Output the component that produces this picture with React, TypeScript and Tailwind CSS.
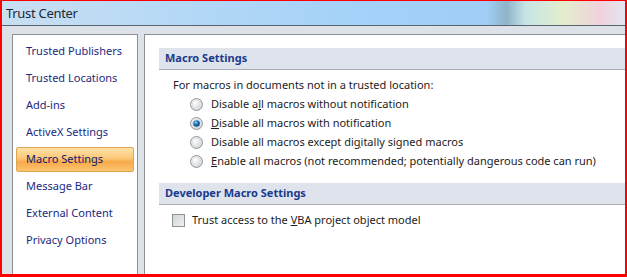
import React from 'react';

const font = { fontFamily: '"Noto Sans", "Open Sans", sans-serif' };

const navItems = [
  'Trusted Publishers',
  'Trusted Locations',
  'Add-ins',
  'ActiveX Settings',
  'Macro Settings',
  'Message Bar',
  'External Content',
  'Privacy Options',
];

const Radio: React.FC<{ checked?: boolean }> = ({ checked }) => (
  <svg width="13" height="13" viewBox="0 0 13 13" className="shrink-0">
    <defs>
      <radialGradient id="rf" cx="0.35" cy="0.35" r="0.7">
        <stop offset="0" stopColor="#ffffff" />
        <stop offset="1" stopColor="#cfd3d6" />
      </radialGradient>
      <radialGradient id="rd" cx="0.4" cy="0.35" r="0.7">
        <stop offset="0" stopColor="#8fd0f5" />
        <stop offset="0.5" stopColor="#1c6fb5" />
        <stop offset="1" stopColor="#0a3f78" />
      </radialGradient>
    </defs>
    <circle cx="6.5" cy="6.5" r="6" fill="url(#rf)" stroke="#939899" />
    <circle cx="6.5" cy="6.5" r="4.3" fill="none" stroke="#dfe2e4" />
    {checked && <circle cx="6.5" cy="6.5" r="3.3" fill="url(#rd)" />}
  </svg>
);

const RadioRow: React.FC<{ checked?: boolean; children: React.ReactNode }> = ({ checked, children }) => (
  <div className="flex items-center h-[19px] gap-[8px]">
    <Radio checked={checked} />
    <span>{children}</span>
  </div>
);

const SectionHeader: React.FC<{ title: string }> = ({ title }) => (
  <div className="h-[22px] flex items-center pl-[6px] bg-[#dfe4ec] border-b border-[#a9adb5] font-bold text-[#1a3a8c]">
    {title}
  </div>
);

const App: React.FC = () => {
  return (
    <div
      className="w-[627px] h-[277px] overflow-hidden flex flex-col border-t border-l-2 border-r-2 border-b-[3px] border-[#ff0000] bg-[#dde1e8] text-[11px]"
      style={font}
    >
      {/* Title bar */}
      <div className="h-[25px] shrink-0 flex items-center pl-[4px] pt-[2px] border-b border-[#5a6470] bg-[linear-gradient(90deg,#c9dff2_0%,#b4d8f6_30%,#a5d2f8_55%,#9fcdf3_78%,#8fb3c9_81%,#c6e4e6_84%,#e3eecc_90%,#f0d2dc_96%,#e2e6f0_100%)]">
        <span className="text-[13px] tracking-[-0.3px] text-[#1e2833]">Trust Center</span>
      </div>

      {/* Body */}
      <div className="flex-1 flex gap-[6px] pl-[10px] pt-[8px] min-h-0">
        {/* Left nav */}
        <div className="w-[126px] shrink-0 bg-white border border-[#8c8f94] border-b-0 pt-[4px] px-[3px]">
          {navItems.map((item) => {
            const selected = item === 'Macro Settings';
            return (
              <div
                key={item}
                className={
                  selected
                    ? 'h-[25px] mb-[2px] flex items-center pl-[9px] rounded-[2px] border border-[#e0a552] bg-[linear-gradient(180deg,#fde2a8_0%,#fbc878_45%,#f8a94a_60%,#fbc46e_100%)] text-[#0d1a6b]'
                    : 'h-[25px] mb-[2px] flex items-center pl-[10px] text-[#1a2a80]'
                }
              >
                {item}
              </div>
            );
          })}
        </div>

        {/* Main panel */}
        <div className="flex-1 bg-white border-l border-t border-[#8c8f94] pt-[13px] pl-[14px] text-[#1c1c1c]">
          <SectionHeader title="Macro Settings" />
          <div className="pl-[14px] pt-[6px]">
            <div className="h-[19px] flex items-center">For macros in documents not in a trusted location:</div>
            <div className="pl-[17px]">
              <RadioRow>
                Disable a<u>l</u>l macros without notification
              </RadioRow>
              <RadioRow checked>
                <u>D</u>isable all macros with notification
              </RadioRow>
              <RadioRow>
                Disable all macros except di<u>g</u>itally signed macros
              </RadioRow>
              <RadioRow>
                <u>E</u>nable all macros (not recommended; potentially dangerous code can run)
              </RadioRow>
            </div>
          </div>
          <div className="mt-[12px]">
            <SectionHeader title="Developer Macro Settings" />
          </div>
          <div className="flex items-center h-[19px] mt-[6px] pl-[13px] gap-[7px]">
            <span className="w-[13px] h-[13px] shrink-0 border border-[#8e9396] bg-[linear-gradient(135deg,#d3d6d9_0%,#eef0f1_100%)]" />
            <span>
              Trust access to the <u>V</u>BA project object model
            </span>
          </div>
        </div>
      </div>
    </div>
  );
};

export default App;
